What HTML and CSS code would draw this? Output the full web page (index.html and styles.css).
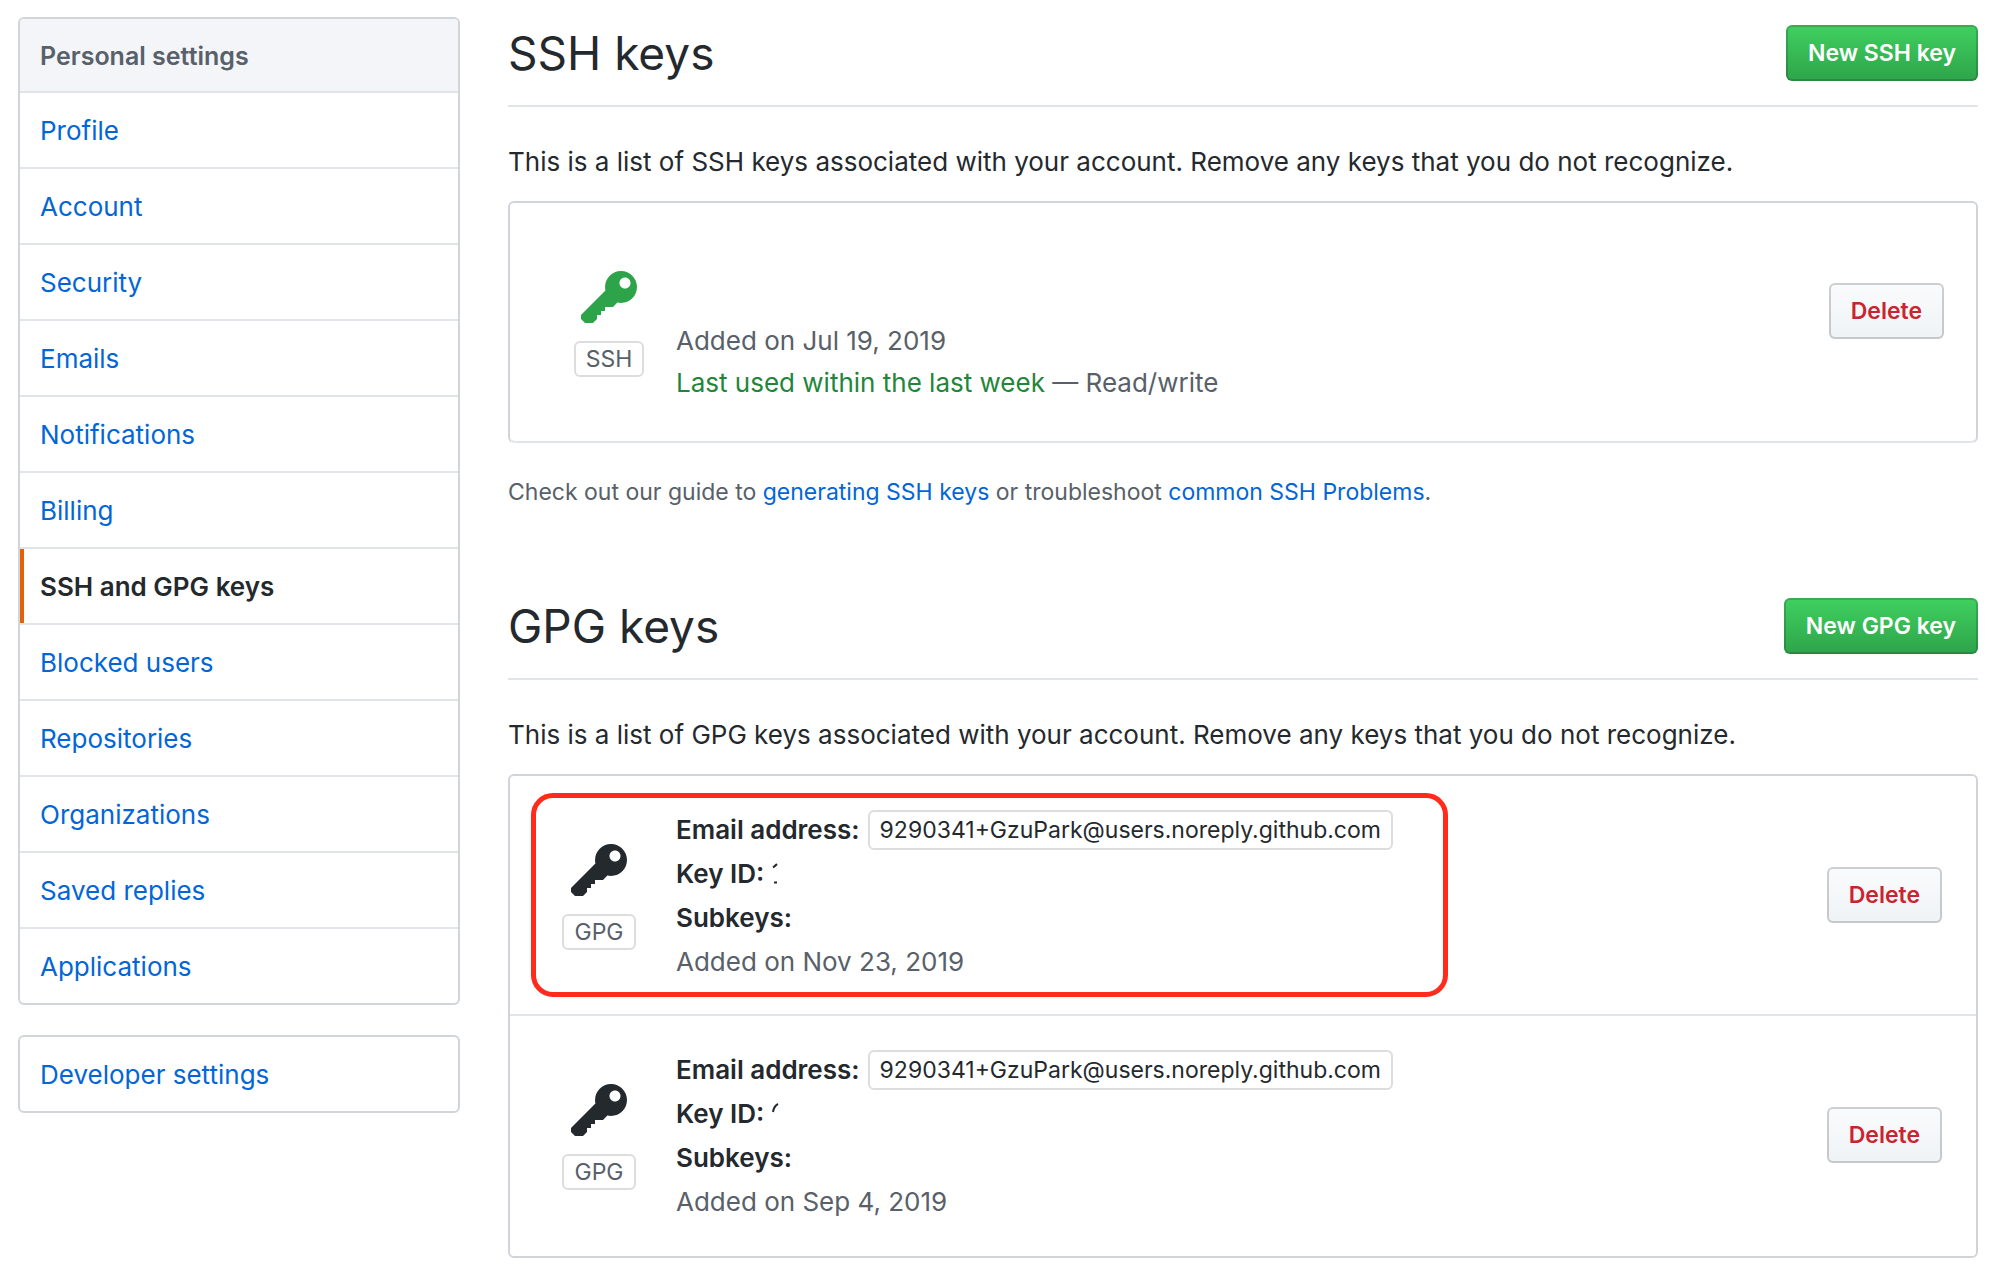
FILE: index.html
```html
<!DOCTYPE html>
<html lang="en">
<head>
<meta charset="utf-8">
<meta name="viewport" content="width=device-width, initial-scale=1">
<title>SSH and GPG keys</title>
<link rel="stylesheet" href="styles.css">
</head>
<body>
<svg class="sprite" aria-hidden="true">
  <symbol id="key" viewBox="0 0 14 16">
    <path fill-rule="evenodd" d="M12.83 2.17C12.08 1.42 11.14 1.03 10 1c-1.13.03-2.08.42-2.83 1.17S6.04 3.86 6.01 5c0 .3.03.59.09.89L0 12v1l1 1h2l1-1v-1h1v-1h1v-1h2l1.09-1.11c.3.08.59.11.91.11 1.14-.03 2.08-.42 2.83-1.17S13.97 6.14 14 5c-.03-1.14-.42-2.08-1.17-2.83zM11 5.38c-.77 0-1.38-.61-1.38-1.38 0-.77.61-1.38 1.38-1.38.77 0 1.38.61 1.38 1.38 0 .77-.61 1.38-1.38 1.38z"/>
  </symbol>
</svg>
<div class="page">
  <aside class="sidebar">
    <nav class="menu" aria-label="Personal settings">
      <h2 class="menu-heading">Personal settings</h2>
      <a class="menu-item" href="#">Profile</a>
      <a class="menu-item" href="#">Account</a>
      <a class="menu-item" href="#">Security</a>
      <a class="menu-item" href="#">Emails</a>
      <a class="menu-item" href="#">Notifications</a>
      <a class="menu-item" href="#">Billing</a>
      <a class="menu-item selected" href="#" aria-current="page">SSH and GPG keys</a>
      <a class="menu-item" href="#">Blocked users</a>
      <a class="menu-item" href="#">Repositories</a>
      <a class="menu-item" href="#">Organizations</a>
      <a class="menu-item" href="#">Saved replies</a>
      <a class="menu-item" href="#">Applications</a>
    </nav>
    <nav class="menu" aria-label="Developer settings">
      <a class="menu-item" href="#">Developer settings</a>
    </nav>
  </aside>
  <main class="content">
    <section>
      <header class="subhead">
        <h1 class="subhead-title">SSH keys</h1>
        <button class="btn btn-primary" type="button">New SSH key</button>
      </header>
      <p class="intro">This is a list of SSH keys associated with your account. Remove any keys that you do not recognize.</p>
      <ul class="key-list key-list-ssh">
        <li class="key-row">
          <div class="key-type">
            <svg class="key-icon key-icon-active" aria-hidden="true"><use href="#key"/></svg>
            <span class="badge">SSH</span>
          </div>
          <div class="key-info">
            <span class="muted">Added on Jul 19, 2019</span>
            <span class="muted"><span class="recent">Last used within the last week</span> — Read/write</span>
          </div>
          <button class="btn btn-danger" type="button">Delete</button>
        </li>
      </ul>
      <p class="note">Check out our guide to <a href="#">generating SSH keys</a> or troubleshoot <a href="#">common SSH Problems</a>.</p>
    </section>
    <section>
      <header class="subhead">
        <h1 class="subhead-title">GPG keys</h1>
        <button class="btn btn-primary" type="button">New GPG key</button>
      </header>
      <p class="intro">This is a list of GPG keys associated with your account. Remove any keys that you do not recognize.</p>
      <ul class="key-list key-list-gpg">
        <li class="key-row highlighted">
          <div class="key-type">
            <svg class="key-icon" aria-hidden="true"><use href="#key"/></svg>
            <span class="badge">GPG</span>
          </div>
          <div class="key-info">
            <span class="line"><strong>Email address:</strong> <span class="badge badge-email">9290341+GzuPark@users.noreply.github.com</span></span>
            <span class="line"><strong>Key ID:</strong> <svg class="masked" viewBox="0 0 8 22" aria-hidden="true"><path d="M1 4.500Q3 3 5 1M2 19.500H5"/></svg></span>
            <strong>Subkeys:</strong>
            <span class="muted">Added on Nov 23, 2019</span>
          </div>
          <button class="btn btn-danger" type="button">Delete</button>
        </li>
        <li class="key-row">
          <div class="key-type">
            <svg class="key-icon" aria-hidden="true"><use href="#key"/></svg>
            <span class="badge">GPG</span>
          </div>
          <div class="key-info">
            <span class="line"><strong>Email address:</strong> <span class="badge badge-email">9290341+GzuPark@users.noreply.github.com</span></span>
            <span class="line"><strong>Key ID:</strong> <svg class="masked" viewBox="0 0 8 22" aria-hidden="true"><path d="M1 9Q2 3 6 1"/></svg></span>
            <strong>Subkeys:</strong>
            <span class="muted">Added on Sep 4, 2019</span>
          </div>
          <button class="btn btn-danger" type="button">Delete</button>
        </li>
      </ul>
    </section>
  </main>
</div>
</body>
</html>
```
FILE: styles.css
```css
*,
*::after { box-sizing: border-box; }

body {
  margin: 0;
  background: #fff;
  color: #24292e;
  font: 26px/42px Inter, "Liberation Sans", sans-serif;
}

h1, h2, p, ul { margin: 0; padding: 0; }
ul { list-style: none; }
a { color: #0366d6; text-decoration: none; }
strong { font-weight: 600; }

.sprite { display: none; }

.page {
  display: flex;
  align-items: flex-start;
  gap: 48px;
  padding: 17px 36px 8px 18px;
}

/* Sidebar */
.sidebar {
  display: flex;
  flex: 0 0 442px;
  flex-direction: column;
  gap: 30px;
}

.menu {
  border: 2px solid #d1d5da;
  border-radius: 6px;
  overflow: hidden;
}

.menu-heading,
.menu-item {
  display: block;
  padding: 17px 20px 15px;
  border-bottom: 2px solid #e1e4e8;
}

.menu-heading {
  padding: 16px 20px 14px;
  background: #f3f5f9;
  color: #586069;
  font-size: 25px;
  font-weight: 600;
}

.menu-item:last-child { border-bottom: 0; }

.menu-item.selected {
  box-shadow: inset 4px 0 0 #e36209;
  color: #24292e;
  font-weight: 600;
}

/* Content */
.content {
  display: flex;
  flex: 1;
  flex-direction: column;
  gap: 80px;
  min-width: 0;
}

.subhead {
  display: flex;
  align-items: center;
  justify-content: space-between;
  padding: 8px 0 24px;
  border-bottom: 2px solid #e1e4e8;
}

.subhead-title {
  font-size: 46px;
  font-weight: 400;
  line-height: 56px;
}

.intro { margin: 34px 0 18px; }

.note {
  margin-top: 31px;
  color: #586069;
  font-size: 23px;
  line-height: 36px;
}

.btn {
  flex: none;
  height: 56px;
  padding: 0 20px;
  border: 2px solid rgba(27, 31, 35, 0.2);
  border-radius: 6px;
  background-clip: border-box;
  background-origin: border-box;
  font: 600 23px/48px Inter, "Liberation Sans", sans-serif;
}

.btn-primary {
  background-image: linear-gradient(#40d060, #2ea44a);
  color: #fff;
}

.btn-danger {
  background-image: linear-gradient(#fafbfc, #eff3f6);
  color: #cb2431;
}

/* Key lists */
.key-list {
  border: 2px solid #d1d5da;
  border-radius: 6px;
}

.key-row {
  display: flex;
  align-items: center;
  gap: 20px;
  min-height: 240px;
  border-bottom: 2px solid #e1e4e8;
}

.key-row:last-child { border-bottom-color: transparent; }

.key-type {
  display: flex;
  flex: none;
  flex-direction: column;
  align-items: center;
  gap: 10px;
}

.key-icon {
  width: 56px;
  height: 64px;
  fill: #24292e;
}

.key-icon-active { fill: #2ea44a; }

.badge {
  padding: 0 10px;
  border: 2px solid #ddd;
  border-radius: 6px;
  color: #586069;
  font-size: 23px;
  line-height: 32px;
}

.key-info {
  display: flex;
  flex: 1;
  flex-direction: column;
}

.muted { color: #586069; }
.recent { color: #22863a; }

.key-list-ssh { border-bottom: 0; }
.key-list-ssh .key-row {
  padding: 0 32px 0 52px;
  border-bottom-color: #e1e4e8;
  border-radius: 0 0 6px 6px;
}
.key-list-ssh .key-type { width: 94px; }
.key-list-ssh .key-info { padding-top: 80px; }
.key-list-ssh .btn { margin-bottom: 22px; }

.key-list-gpg .key-row { padding: 0 34px 0 32px; }
.key-list-gpg .key-type { width: 114px; }
.key-list-gpg .key-info {
  padding-top: 2px;
  line-height: 44px;
}

.line {
  display: flex;
  align-items: center;
  gap: 8px;
}

.badge-email {
  color: #24292e;
  line-height: 36px;
}

.masked {
  width: 8px;
  height: 22px;
  fill: none;
  stroke: #24292e;
  stroke-width: 2;
}

/* Callout ring drawn over the first GPG key */
.highlighted { position: relative; }

.highlighted::after {
  content: "";
  position: absolute;
  top: 17px;
  bottom: 17px;
  left: 21px;
  width: 917px;
  border: 5px solid #ff2b1d;
  border-radius: 22px;
  pointer-events: none;
}
```
